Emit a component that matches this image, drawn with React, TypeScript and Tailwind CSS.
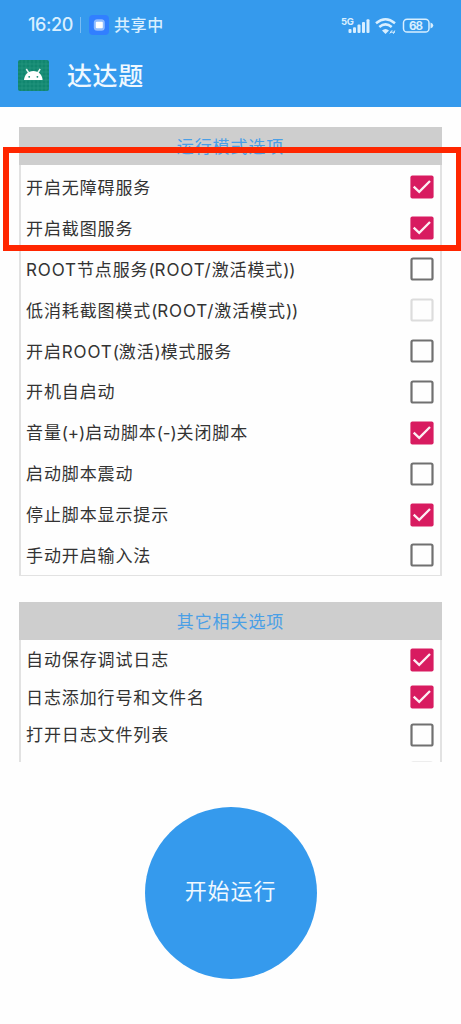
import { Fragment } from 'react';
import clsx from 'clsx';

type Option = {
  label: string;
  checked?: boolean;
  disabled?: boolean;
};

const modeOptions: Option[] = [
  { label: '开启无障碍服务', checked: true },
  { label: '开启截图服务', checked: true },
  { label: 'ROOT节点服务(ROOT/激活模式))' },
  { label: '低消耗截图模式(ROOT/激活模式))', disabled: true },
  { label: '开启ROOT(激活)模式服务' },
  { label: '开机自启动' },
  { label: '音量(+)启动脚本(-)关闭脚本', checked: true },
  { label: '启动脚本震动' },
  { label: '停止脚本显示提示', checked: true },
  { label: '手动开启输入法' },
];

const otherOptions: Option[] = [
  { label: '自动保存调试日志', checked: true },
  { label: '日志添加行号和文件名', checked: true },
  { label: '打开日志文件列表' },
  { label: '', disabled: true },
];

function Checkbox({ checked, disabled }: Omit<Option, 'label'>) {
  return (
    <svg width="24" height="24" viewBox="0 0 24 24" className="shrink-0">
      {checked ? (
        <>
          <rect x="0.4" y="0.4" width="23.2" height="23.2" rx="2" fill="#d81b60" />
          <path d="M3.7 11.6 9.2 16.8 20 6" fill="none" stroke="#fdeef4" strokeWidth="2.3" />
        </>
      ) : (
        <rect
          x="1.5"
          y="1.5"
          width="21"
          height="21"
          rx="1.6"
          fill="none"
          stroke={disabled ? '#dcdcdc' : '#707070'}
          strokeWidth="2.2"
        />
      )}
    </svg>
  );
}

// Brackets are set tighter than the text around them
function Label({ text }: { text: string }) {
  return (
    <span className="whitespace-nowrap pt-px text-[17px] leading-6 tracking-[0.88px] text-[#333]">
      {text.split(/([()+-]+)/).map((part, i) => (
        <Fragment key={i}>
          {i % 2 ? <span className="tracking-[-0.1px]">{part}</span> : part}
        </Fragment>
      ))}
    </span>
  );
}

function Panel({ title, options, dense }: { title: string; options: Option[]; dense?: boolean }) {
  return (
    <section
      className={clsx(
        'shrink-0 border-x-2 border-b border-[#e2e2e2]',
        !dense && 'h-[449px]',
      )}
    >
      <h2 className="-mx-0.5 flex h-[38px] items-center justify-center bg-[#cecece] pt-[3px] text-[17px] tracking-[0.88px] text-[#4a9fe6]">
        {title}
      </h2>
      <ul className={dense ? 'pt-[1px]' : 'pt-[2px]'}>
        {options.map((option, i) => (
          <li
            key={i}
            className={clsx(
              'flex items-center justify-between pr-[6px] pl-[5px]',
              dense ? 'h-[37.6px]' : 'h-[40.9px]',
            )}
          >
            <Label text={option.label} />
            <Checkbox checked={option.checked} disabled={option.disabled} />
          </li>
        ))}
      </ul>
    </section>
  );
}

function StatusBar() {
  return (
    <div className="flex h-[50px] items-center pl-[28px] text-[#d9efff]">
      <span className="w-[46px] text-[18px] leading-none font-medium tracking-[-0.4px]">16:20</span>
      <span className="ml-[6px] h-4 w-px bg-[#7abcf3]" />
      <svg width="20" height="20" viewBox="0 0 20 20" className="ml-[8px]">
        <rect width="20" height="20" rx="4" fill="#317fff" />
        <rect x="4.8" y="4.3" width="11" height="11.4" rx="3.5" fill="#8fbcff" />
        <rect x="6.8" y="6.8" width="7" height="6.4" rx="1" fill="#fff" />
      </svg>
      <span className="ml-[5px] text-[16px] leading-none font-medium tracking-[0.6px]">共享中</span>
      <svg width="94" height="22" viewBox="340 13 94 22" className="mr-[27px] ml-auto" fill="none">
        <text x="341" y="24" fontSize="9.5" fontWeight="700" fill="currentColor" textLength="13">5G</text>
        <g fill="currentColor">
          <rect x="348.5" y="28" width="3" height="4" rx="1" />
          <rect x="353" y="26.3" width="3" height="5.7" rx="1" />
          <rect x="357.5" y="23.5" width="3" height="8.5" rx="1" />
          <rect x="362" y="21" width="3" height="11" rx="1" />
          <rect x="366.5" y="18.3" width="3" height="13.7" rx="1" />
        </g>
        <g stroke="currentColor" strokeWidth="2.5">
          <path d="M376 22.3q9.500-8 19 0" />
          <path d="M379.3 26q6.2-5.200 12.4 0" />
        </g>
        <path d="M382 29.400q3.500-3 7 0L385.500 33Z" fill="currentColor" />
        <path d="M390 31.200h5M392.200 29.200l-2.400 3.300M394.800 29.500l-1.500 3.300" stroke="currentColor" strokeWidth="1" />
        <rect x="403.5" y="18.2" width="25.5" height="12.8" rx="3.6" stroke="currentColor" strokeWidth="1.5" />
        <path d="M430.5 21.5q2.8 1 2.8 3t-2.8 3Z" fill="currentColor" />
        <text x="409" y="28.8" fontSize="11.5" fontWeight="700" fill="currentColor" textLength="14">68</text>
      </svg>
    </div>
  );
}

function AppIcon() {
  return (
    <svg width="31" height="31" viewBox="0 0 31 31">
      <rect width="31" height="31" rx="2" fill="#11866f" />
      <path
        d="M4 0v31M8 0v31M12 0v31M16 0v31M20 0v31M24 0v31M28 0v31M0 4h31M0 8h31M0 12h31M0 16h31M0 20h31M0 24h31M0 28h31"
        stroke="#2b9a83"
        strokeWidth="0.6"
      />
      <path d="M8.3 9 11.2 13.5M22.2 9 19.3 13.5" stroke="#e6f5f1" strokeWidth="1.5" />
      <path d="M6 20C6.4 14.8 10 11 15.3 11S24.2 14.8 24.6 20Z" fill="#fff" />
      <circle cx="11.2" cy="16.8" r="0.9" fill="#11866f" />
      <circle cx="19.4" cy="16.8" r="0.9" fill="#11866f" />
    </svg>
  );
}

export default function App() {
  return (
    <div className="relative flex h-[1024px] w-[461px] flex-col overflow-hidden bg-[#fefefe] font-['Inter','Noto_Sans_CJK_SC',sans-serif]">
      <header className="h-[107px] shrink-0 bg-[#359aed]">
        <StatusBar />
        <div className="flex h-[51px] items-center pl-[18px]">
          <AppIcon />
          <h1 className="ml-[18px] pt-[2px] text-[25px] leading-none font-medium tracking-[0.6px] text-[#eff8ff]">
            达达题
          </h1>
        </div>
      </header>

      <main className="flex h-[655px] shrink-0 flex-col gap-[26px] overflow-hidden px-[19px] pt-[20px]">
        <Panel title="运行模式选项" options={modeOptions} />
        <Panel title="其它相关选项" options={otherOptions} dense />
      </main>

      <div className="flex justify-center pt-[45px]">
        <button className="size-[172px] rounded-full bg-[#359aed] pb-[4px] text-[22px] tracking-[0.9px] text-[#eff8ff]">
          开始运行
        </button>
      </div>

      {/* Highlight around the two services that have to be on */}
      <div className="pointer-events-none absolute top-[147px] left-[3px] h-[104px] w-[459px] border-[6px] border-[#ff2600]" />
    </div>
  );
}
